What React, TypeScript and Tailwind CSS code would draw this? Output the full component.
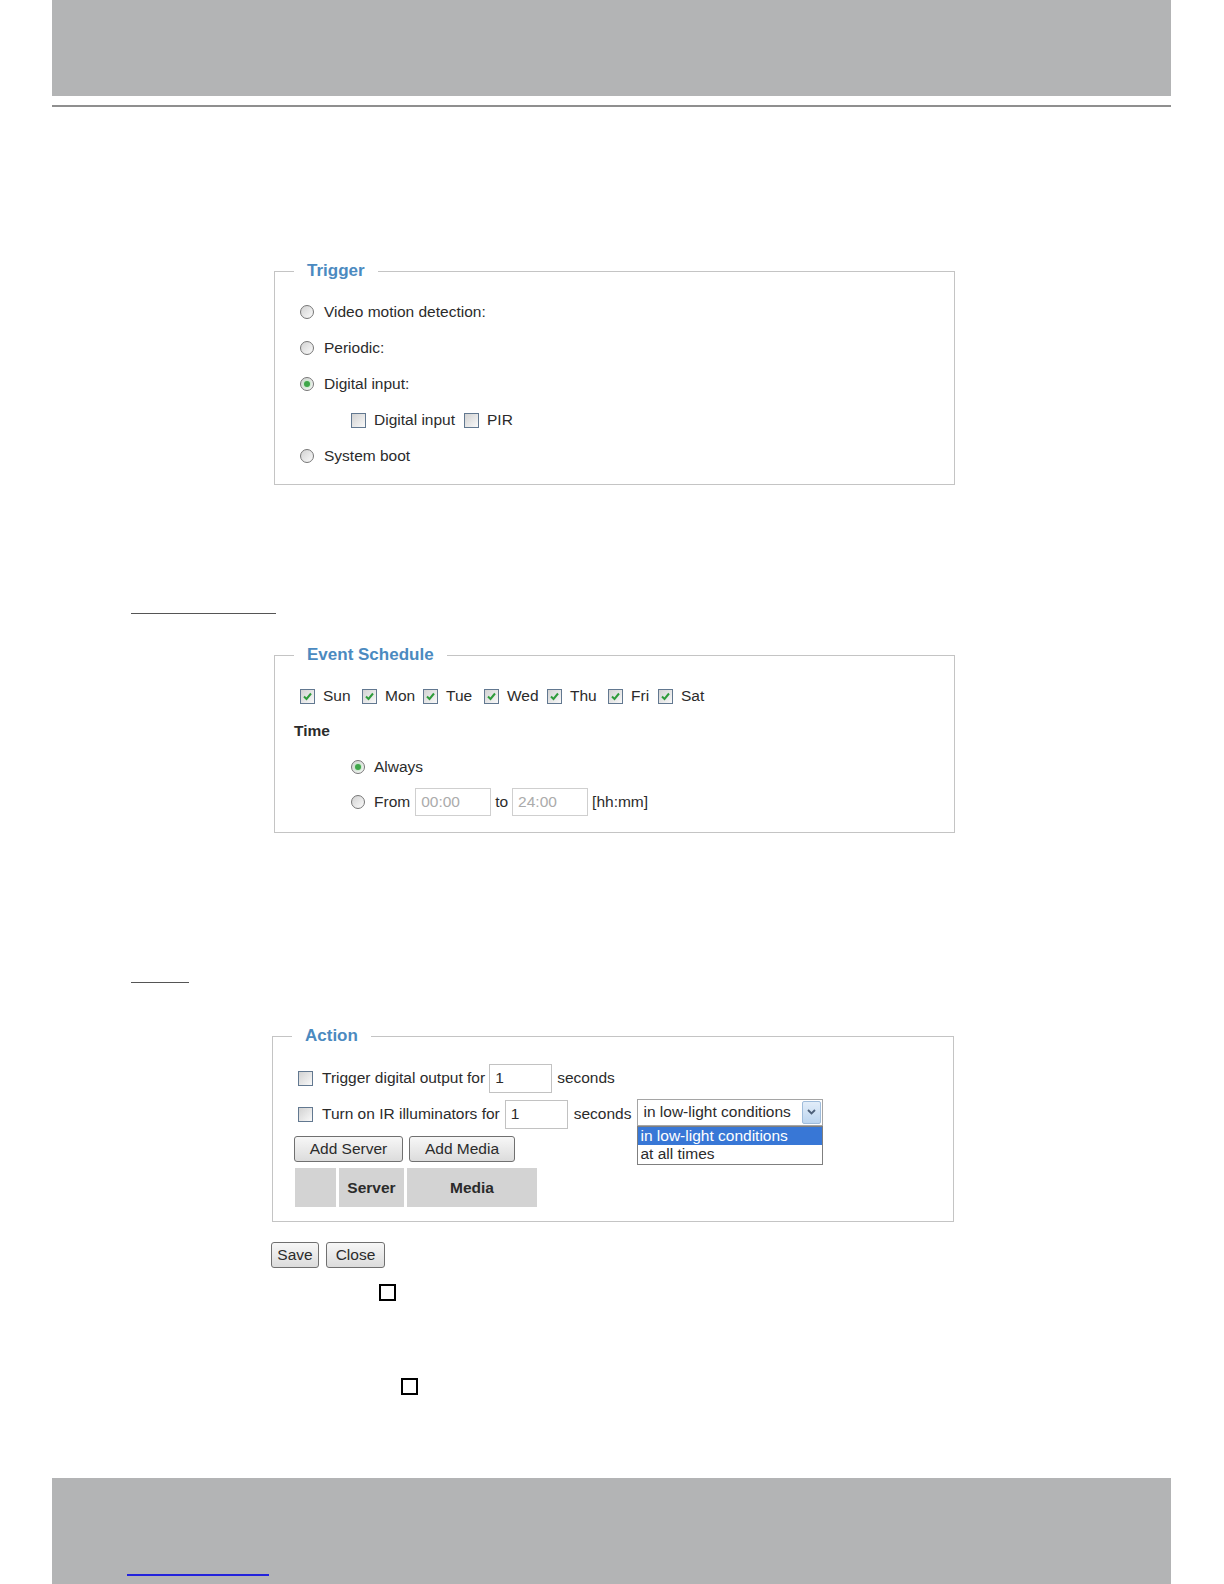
import type { ReactNode } from 'react';

const Radio = ({ checked = false }: { checked?: boolean }) => (
  <span className="inline-flex h-[14px] w-[14px] shrink-0 items-center justify-center rounded-full border border-[#767676] bg-linear-to-br from-[#d2d2d2] to-[#fbfbfb]">
    {checked && <span className="h-[6px] w-[6px] rounded-full bg-[#3fa64a] shadow-[0_0_2px_1px_#c4e8c7]" />}
  </span>
);

const Checkbox = ({ checked = false }: { checked?: boolean }) => (
  <span className="inline-flex h-[15px] w-[15px] shrink-0 items-center justify-center border border-[#627890] bg-linear-to-br from-[#d2d2d2] to-[#f9f9f9]">
    {checked && (
      <svg width="11" height="11" viewBox="0 0 11 11">
        <path d="M2 5.5 L4.5 8 L9 2.5" fill="none" stroke="#2f9c3b" strokeWidth="2" />
      </svg>
    )}
  </span>
);

const Box = ({ legend, className, children }: { legend: string; className: string; children: ReactNode }) => (
  <fieldset className={`border border-[#c4c4c4] pl-[19px] pr-4 ${className}`}>
    <legend className="px-[13px] text-[17px] font-bold leading-5 text-[#4b8ac0]">{legend}</legend>
    {children}
  </fieldset>
);

const Btn = ({ children, className }: { children: ReactNode; className: string }) => (
  <button
    type="button"
    className={`flex h-[26px] items-center justify-center rounded-[3px] border border-[#707070] bg-linear-to-b from-[#f7f7f7] to-[#dcdcdc] text-[15.5px] leading-none text-[#2b2b2b] ${className}`}
  >
    {children}
  </button>
);

const days = [
  { name: 'Sun', w: 'w-[62px]' },
  { name: 'Mon', w: 'w-[61px]' },
  { name: 'Tue', w: 'w-[61px]' },
  { name: 'Wed', w: 'w-[63px]' },
  { name: 'Thu', w: 'w-[61px]' },
  { name: 'Fri', w: 'w-[50px]' },
  { name: 'Sat', w: 'w-auto' },
];

export default function App() {
  return (
    <div className="flex min-h-[1584px] w-[1224px] flex-col bg-white font-['Liberation_Sans',Arial,sans-serif] text-[15.5px] text-[#2b2b2b]">
      {/* Header */}
      <div className="ml-[52px] h-[96px] w-[1119px] bg-[#b3b4b5]" />
      <div className="ml-[52px] mt-[9px] h-[2px] w-[1119px] bg-[#8f8f8f]" />

      {/* Trigger */}
      <Box legend="Trigger" className="ml-[274px] mt-[154px] w-[681px] pb-[10px] pt-[13px]">
        <div className="flex h-9 items-center pl-[6px]">
          <Radio />
          <span className="ml-[10px]">Video motion detection:</span>
        </div>
        <div className="flex h-9 items-center pl-[6px]">
          <Radio />
          <span className="ml-[10px]">Periodic:</span>
        </div>
        <div className="flex h-9 items-center pl-[6px]">
          <Radio checked />
          <span className="ml-[10px]">Digital input:</span>
        </div>
        <div className="flex h-9 items-center pl-[57px]">
          <Checkbox />
          <span className="ml-[8px] mr-[9px]">Digital input</span>
          <Checkbox />
          <span className="ml-[8px]">PIR</span>
        </div>
        <div className="flex h-9 items-center pl-[6px]">
          <Radio />
          <span className="ml-[10px]">System boot</span>
        </div>
      </Box>

      <div className="ml-[131px] mt-[128px] h-px w-[145px] bg-[#555]" />

      {/* Event Schedule */}
      <Box legend="Event Schedule" className="ml-[274px] mt-[31px] w-[681px] pb-[14px] pt-[13px]">
        <div className="flex h-9 items-center pl-[6px]">
          {days.map((d) => (
            <span key={d.name} className={`flex shrink-0 items-center gap-[8px] ${d.w}`}>
              <Checkbox checked />
              <span>{d.name}</span>
            </span>
          ))}
        </div>
        <div className="flex h-[34px] items-center font-bold">Time</div>
        <div className="flex h-[37px] items-center pl-[57px]">
          <Radio checked />
          <span className="ml-[9px]">Always</span>
        </div>
        <div className="flex h-[33px] items-center pl-[57px]">
          <Radio />
          <span className="ml-[9px]">From</span>
          <span className="ml-[5px] flex h-[28px] w-[76px] items-center border border-[#cfcfcf] pl-[5px] text-[#ababab]">00:00</span>
          <span className="ml-[4px]">to</span>
          <span className="ml-[4px] flex h-[28px] w-[76px] items-center border border-[#cfcfcf] pl-[5px] text-[#ababab]">24:00</span>
          <span className="ml-[4px]">[hh:mm]</span>
        </div>
      </Box>

      <div className="ml-[131px] mt-[149px] h-px w-[58px] bg-[#555]" />

      {/* Action */}
      <Box legend="Action" className="ml-[272px] mt-[43px] w-[682px] pb-[14px] pt-[14px]">
        <div className="flex h-9 items-center pl-[6px]">
          <Checkbox />
          <span className="ml-[9px]">Trigger digital output for</span>
          <span className="ml-[4px] flex h-[29px] w-[63px] items-center border border-[#c2c2c2] pl-[5px]">1</span>
          <span className="ml-[5px]">seconds</span>
        </div>
        <div className="flex h-9 items-center pl-[6px]">
          <Checkbox />
          <span className="ml-[9px]">Turn on IR illuminators for</span>
          <span className="ml-[5px] flex h-[29px] w-[63px] items-center border border-[#c2c2c2] pl-[5px]">1</span>
          <span className="ml-[6px]">seconds</span>
          <div className="relative mb-[4px] ml-[6px]">
            <div className="flex h-[27px] w-[186px] items-center justify-between border border-[#a5a5a5] pl-[5px] pr-[1px]">
              <span>in low-light conditions</span>
              <span className="flex h-[23px] w-[19px] items-center justify-center rounded-[2px] border border-[#9fbcdb] bg-linear-to-b from-[#e2edf9] to-[#bcd5ef]">
                <svg width="9" height="6" viewBox="0 0 9 6">
                  <path d="M1 1 L4.5 4.5 L8 1" fill="none" stroke="#4d6079" strokeWidth="1.8" />
                </svg>
              </span>
            </div>
            <div className="absolute left-0 top-[27px] w-[186px] border border-[#7f7f7f] bg-white">
              <div className="flex h-[18px] items-center bg-[#3877d6] pl-[2px] text-white">in low-light conditions</div>
              <div className="flex h-[19px] items-center pl-[2px]">at all times</div>
            </div>
          </div>
        </div>
        <div className="ml-[2px] mt-[4px] flex gap-[6px]">
          <Btn className="w-[109px]">Add Server</Btn>
          <Btn className="w-[106px]">Add Media</Btn>
        </div>
        <div className="ml-[3px] mt-[6px] flex h-[39px] gap-[3px] font-bold">
          <div className="w-[41px] bg-[#d3d3d3]" />
          <div className="flex w-[65px] items-center justify-center bg-[#d3d3d3]">Server</div>
          <div className="flex w-[130px] items-center justify-center bg-[#d3d3d3]">Media</div>
        </div>
      </Box>

      <div className="ml-[271px] mt-[20px] flex gap-[7px]">
        <Btn className="h-[25px] w-[48px]">Save</Btn>
        <Btn className="h-[25px] w-[59px]">Close</Btn>
      </div>

      <span className="ml-[379px] mt-[16px] h-[17px] w-[17px] border-2 border-black" />
      <span className="ml-[401px] mt-[77px] h-[17px] w-[17px] border-2 border-black" />

      {/* Footer */}
      <div className="ml-[52px] mt-[83px] flex h-[106px] w-[1119px] flex-col justify-end bg-[#b3b4b5] pb-[8px] pl-[75px]">
        <a href="#" className="block h-[2px] w-[142px] bg-[#2323dc]" aria-label="link" />
      </div>
    </div>
  );
}
